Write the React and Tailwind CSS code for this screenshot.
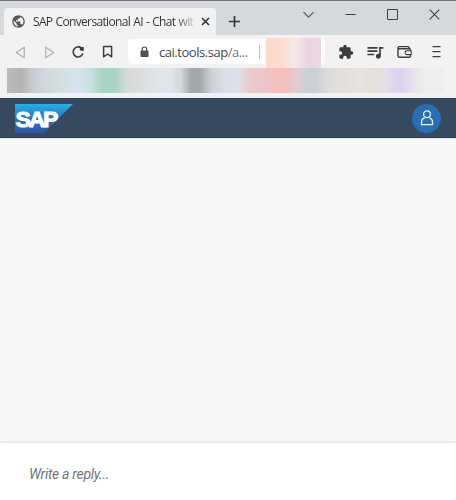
import { MdPublic, MdExtension, MdQueueMusic } from "react-icons/md";

function TitleBar() {
  return (
    <div className="flex h-[35px] border-t border-[#77787d] bg-[#d5d9dc] pl-1">
      <div className="mt-[7px] flex h-[27px] w-[212px] items-center rounded-t-[4px] bg-[#f2f2f2] pl-[7px]">
        <MdPublic className="size-[15px] shrink-0 text-[#54585c]" />
        <div className="ml-[7px] w-[161px] bg-gradient-to-r from-[#303336] from-88% to-[#d0d0d0] bg-clip-text text-[12px] leading-[18px] font-medium tracking-[-0.65px] whitespace-nowrap text-transparent [word-spacing:0.6px]">
          SAP Conversational AI - Chat wit
        </div>
        <svg className="ml-[7px] size-[9px] shrink-0" viewBox="0 0 9 9" fill="none" stroke="#34373a" strokeWidth="1.6">
          <path d="M1 1l7 7M8 1l-7 7" />
        </svg>
      </div>
      <svg className="mt-[15px] ml-[13px] size-[11px] shrink-0" viewBox="0 0 11 11" fill="none" stroke="#34373a" strokeWidth="1.7">
        <path d="M5.5 0v11M0 5.5h11" />
      </svg>
      <div className="mt-[8px] mr-[16px] ml-auto flex h-[11px] items-center gap-[31px]">
        <svg className="h-[11px] w-[11px]" viewBox="0 0 11 11" fill="none" stroke="#55595c" strokeWidth="1.1">
          <path d="M.5 3.2l5 5 5-5" />
        </svg>
        <svg className="h-[11px] w-[11px]" viewBox="0 0 11 11" fill="none" stroke="#3c4043">
          <path d="M.5 5.5h10" />
        </svg>
        <svg className="h-[11px] w-[11px]" viewBox="0 0 11 11" fill="none" stroke="#3c4043">
          <path d="M.5 .5h10v10H.5z" />
        </svg>
        <svg className="h-[11px] w-[11px]" viewBox="0 0 11 11" fill="none" stroke="#3c4043" strokeWidth="1.1">
          <path d="M.7 .7l9.6 9.6M10.3 .7L.7 10.3" />
        </svg>
      </div>
    </div>
  );
}

function Toolbar() {
  return (
    <div className="flex h-[33px] items-start bg-[#f2f2f2]">
      <div className="mt-[10px] ml-[15px] flex h-[14px] items-center">
        <svg className="h-[13px] w-[11px]" viewBox="0 0 11 13" fill="none" stroke="#b2b3b4" strokeWidth="1.3" strokeLinejoin="round">
          <path d="M9.3 1.2v10.6L1.3 6.5z" />
        </svg>
        <svg className="ml-[18px] h-[13px] w-[11px]" viewBox="0 0 11 13" fill="none" stroke="#b2b3b4" strokeWidth="1.3" strokeLinejoin="round">
          <path d="M1.7 1.2v10.6l8-5.3z" />
        </svg>
        <svg className="ml-[16px] h-[14px] w-[14px]" viewBox="0 0 14 14" fill="none" stroke="#3b3d40" strokeWidth="1.6">
          <path d="M10.4 3.1A5 5 0 1 0 11.9 8.6" />
          <path d="M8.6 4.8L9.5 2.3l3.2-.2-.4 4z" fill="#3b3d40" stroke="none" />
          <circle cx="10.9" cy="3.9" r="1.9" fill="#3b3d40" stroke="none" />
        </svg>
        <svg className="ml-[17px] h-[14px] w-[12px]" viewBox="0 0 12 14" fill="none" stroke="#3b3d40" strokeWidth="1.5" strokeLinejoin="round">
          <path d="M1.6 1.6h8v10.2L5.6 9l-4 2.8z" />
        </svg>
      </div>
      <div className="mt-1 ml-[14px] flex h-[25px] w-[197px] items-center rounded-[4px] bg-white pl-[12px]">
        <svg className="h-[12px] w-[9px] shrink-0" viewBox="0 0 9 12" fill="none">
          <rect x=".5" y="4.5" width="8" height="6.5" rx=".8" fill="#505356" />
          <path d="M2.3 5V3.2a2.2 2.2 0 0 1 4.4 0V5" stroke="#505356" strokeWidth="1.2" />
        </svg>
        <div className="ml-[10px] w-[91px] text-[13px] leading-5 tracking-[-0.46px] whitespace-nowrap text-[#44474a]">
          cai.tools.sap<span className="text-[#73777a]">/a...</span>
        </div>
        <div className="ml-[9px] h-[14px] w-px bg-[#c3c4c5]" />
        <div className="mt-[3px] ml-[6px] h-[30px] w-[55px] shrink-0 bg-[linear-gradient(90deg,#fddac9_0px,#fbdccf_16px,#f6e9e8_28px,#ead5e1_42px,#ead9e5_55px)]" />
      </div>
      <div className="mt-[9px] mr-[15px] ml-auto flex h-[15px] items-center">
        <MdExtension className="size-[16px] text-[#3b3d40]" />
        <MdQueueMusic className="ml-[11px] size-[20px] text-[#3b3d40]" />
        <svg className="ml-[12px] h-[14px] w-[15px]" viewBox="0 0 15 14" fill="none" stroke="#3b3d40" strokeWidth="1.4" strokeLinejoin="round">
          <path d="M12.2 3.8V2.9A1.3 1.3 0 0 0 10.9 1.6H2.6A1.6 1.6 0 0 0 1 3.2v7.5a1.6 1.6 0 0 0 1.6 1.6h9.5a1.3 1.3 0 0 0 1.3-1.3V9.6M1 3.8h11.2a1.3 1.3 0 0 1 1.3 1.3v.6" />
          <path d="M14.2 5.8H10a1.9 1.9 0 0 0 0 3.8h4.2z" strokeWidth="1.1" />
        </svg>
        <svg className="ml-[20px] h-[13px] w-[9px]" viewBox="0 0 9 13" fill="none" stroke="#3b3d40" strokeWidth="1.4">
          <path d="M.5 1.6h8M.5 6.6h8M.5 11.6h8" />
        </svg>
      </div>
    </div>
  );
}

function Bookmarks() {
  return (
    <div className="h-[30px] bg-[#f2f2f2] pl-[7px]">
      <div className="h-[25px] w-[437px] bg-[linear-gradient(90deg,#bcbcbc_0px,#b3b3b3_14px,#c8cbcf_25px,#d0d8e0_38px,#d5dedf_52px,#d5e5ef_70px,#c9dfe1_84px,#a9d4c4_95px,#a9d4c4_108px,#d2dad7_119px,#dcdcdc_132px,#e0e4e7_148px,#dfe7ed_163px,#d2d8dc_174px,#a2a9ad_184px,#a2a9ad_193px,#cfd3d7_205px,#dcdfe8_220px,#dfdfe6_232px,#e9cbce_243px,#e9c8ca_254px,#f3c0bf_269px,#f3bfbe_280px,#ded0d4_291px,#cccfd7_300px,#cccfd7_309px,#dedcdd_322px,#e4dfdc_336px,#e7e4e2_352px,#e4e0db_366px,#e4dfe4_378px,#dfd2ef_388px,#dfd2ef_396px,#e8e3ed_406px,#eeeeee_418px,#eeeeee_437px)]" />
    </div>
  );
}

function AppHeader() {
  return (
    <header className="flex h-10 items-center justify-between border-y border-t-[#293d50] border-b-[#293d50] bg-[#354a5f] pr-[15px] pl-[15px]">
      <svg className="h-[29px] w-[58px]" viewBox="0 0 58 29">
        <defs>
          <linearGradient id="brand" x1="0" y1="0" x2="0" y2="1">
            <stop offset="0" stopColor="#28aee6" />
            <stop offset=".5" stopColor="#2079c7" />
            <stop offset="1" stopColor="#3154a5" />
          </linearGradient>
        </defs>
        <path d="M0 0h58L29 29H0z" fill="url(#brand)" />
        <text transform="translate(.6 22.6) scale(1.02 1)" letterSpacing="-2.2" fill="#fff" stroke="#fff" strokeWidth="1" fontFamily="Liberation Sans, sans-serif" fontWeight="700" fontSize="22.5">
          SAP
        </text>
      </svg>
      <div className="flex size-[29px] items-center justify-center rounded-full bg-[#286eb4]">
        <svg className="h-[16px] w-[14px]" viewBox="0 0 14 16" fill="none" stroke="#e5f2fb" strokeWidth="1.3">
          <circle cx="7" cy="4.3" r="3.4" />
          <path d="M4.6 7.8C2.4 8.4 1.5 10 1.5 12v2.6h11V12c0-2-.9-3.6-3.1-4.2" />
        </svg>
      </div>
    </header>
  );
}

export default function App() {
  return (
    <div className="flex h-[500px] w-[456px] flex-col overflow-hidden bg-[#f7f7f7] font-['Open_Sans','Noto_Sans',sans-serif]">
      <TitleBar />
      <Toolbar />
      <Bookmarks />
      <AppHeader />
      <main className="flex-1 border-t border-[#e7e9eb]" />
      <footer className="h-[57px] bg-white pt-[21px] pl-[29px] shadow-[0_0_3px_rgba(0,0,0,0.18)]">
        <p className="font-['Roboto','Liberation_Sans',sans-serif] text-[14px] leading-5 tracking-[-0.3px] text-[#74777a] italic">
          Write a reply...
        </p>
      </footer>
    </div>
  );
}
